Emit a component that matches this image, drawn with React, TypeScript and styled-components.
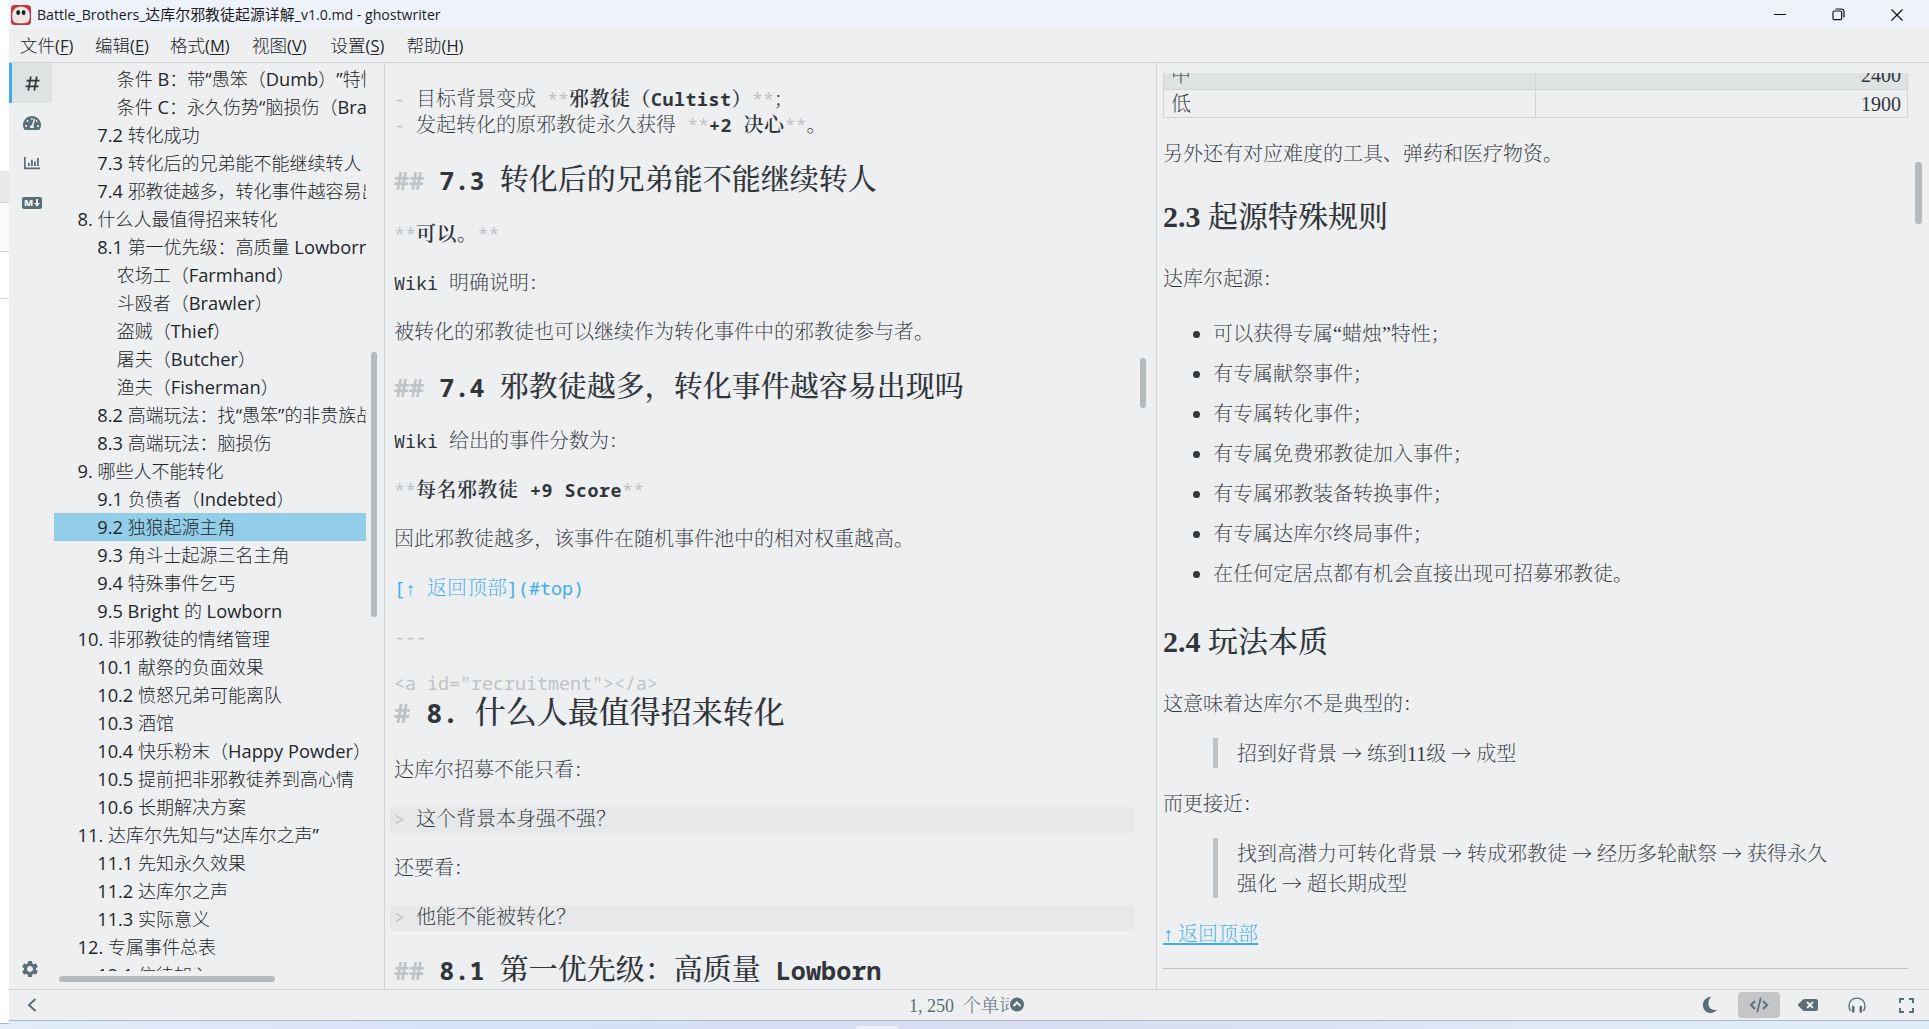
import React from "react";
import styled, { createGlobalStyle, css } from "styled-components";
import { FaBackspace, FaTachometerAlt } from "react-icons/fa";
import { MdSettings } from "react-icons/md";

const UI_CJK = '"Noto Sans CJK SC", sans-serif';
const UI_LATIN = '"Open Sans", "Noto Sans", "Noto Sans CJK SC", sans-serif';
const SERIF_CJK = '"Noto Serif CJK SC", "Noto Sans CJK SC", serif';
const MONO = '"Noto Sans Mono", "DejaVu Sans Mono", monospace';
const SERIF = '"Liberation Serif", "Noto Serif CJK SC", "Noto Sans CJK SC", serif';

const ink = "#31363b";
const icon = "#5b6f78";
const line = "#d0d4d7";
const faint = "#bdc3c7";
const accent = "#3daee9";
const paper = "#eeeff1";

const GlobalStyle = createGlobalStyle`
  * { box-sizing: border-box; }
  body { margin: 0; background: #fff; overflow: hidden; text-spacing-trim: space-all; }
`;

const Desktop = styled.div`
  width: 1929px;
  height: 1029px;
  display: flex;
  flex-direction: column;
  overflow: hidden;
  background: #fff;
  color: ${ink};
`;
const Main = styled.div`
  display: flex;
  height: 1021px;
`;
const Behind = styled.div`
  position: relative;
  width: 9px;
  height: 1024px;
  display: flex;
  flex-direction: column;
  background: #fff;
  border-bottom: 1px solid #b3b9c0;
`;
const BehindTop = styled.div`
  height: 171px;
`;
const BehindTab = styled.div`
  height: 32px;
  background: #e8e8e8;
  border-bottom: 1px solid #d4d4d4;
`;
const BehindRow = styled.div<{ $h: number; $bg: string }>`
  height: ${(p) => p.$h}px;
  background: ${(p) => p.$bg};
  border-bottom: 1px solid #d4d4d4;
`;
const Taskbar = styled.div`
  height: 8px;
  display: flex;
  justify-content: center;
  padding-right: 176px;
  background: linear-gradient(90deg, #e2edf9 0%, #dbe4f8 18%, #d5e2f8 30%, #d8dcf2 45%, #dbe0f5 65%, #e0eaf7 82%, #dfebf8 100%);
`;
const TaskTab = styled.div`
  width: 42px;
  margin-top: 5px;
  border-radius: 4px 4px 0 0;
  background: #f0f2fb;
`;

const Window = styled.div`
  flex: 1;
  min-width: 0;
  display: flex;
  flex-direction: column;
  background: ${paper};
  border-bottom: 1px solid #b3b9c0;
`;
const TitleBar = styled.div`
  height: 29px;
  display: flex;
  align-items: center;
  padding: 0 3px 0 2px;
  background: #eef3fb;
`;
const TitleText = styled.div`
  flex: 1;
  margin-left: 6px;
  padding-bottom: 2px;
  font-family: ${UI_CJK};
  font-size: 14.95px;
  line-height: 27px;
  color: #1b1b1b;
  white-space: pre;
`;
const WinButton = styled.div`
  width: 58.5px;
  display: flex;
  justify-content: center;
`;
const MenuBar = styled.div`
  height: 34px;
  display: flex;
  padding-left: 11px;
  border-bottom: 1px solid ${line};
`;
const MenuItem = styled.div<{ $w: number }>`
  width: ${(p) => p.$w}px;
  font-family: ${UI_CJK};
  font-size: 17.5px;
  font-weight: 300;
  line-height: 32px;
  white-space: pre;
  color: #232629;
`;

/* Latin runs get their own face and size next to the ideographs;
   a zero line-height keeps both faces from stretching the line box. */
const LatinRun = styled.span<{ $font: string; $ratio: number; $weight?: number }>`
  font-family: ${(p) => p.$font};
  font-size: ${(p) => p.$ratio}em;
  line-height: 0;
  ${(p) => p.$weight && css`font-weight: ${p.$weight};`}
`;
const HanRun = styled.span<{ $font: string }>`
  font-family: ${(p) => p.$font};
  line-height: 0;
`;
const Key = styled.u`
  text-underline-offset: 2px;
  text-decoration-thickness: 1px;
`;

type Face = { latin: string; han: string; ratio: number; weight?: number };
const titleFace: Face = { latin: UI_LATIN, han: UI_CJK, ratio: 0.945, weight: 400 };
const uiFace: Face = { latin: UI_LATIN, han: UI_CJK, ratio: 1.015, weight: 400 };
const monoFace: Face = { latin: MONO, han: SERIF_CJK, ratio: 0.9167, weight: 400 };
const strongFace: Face = { latin: MONO, han: SERIF_CJK, ratio: 0.9167, weight: 700 };
const headFace: Face = { latin: MONO, han: SERIF_CJK, ratio: 0.868, weight: 700 };
const serifFace: Face = { latin: SERIF, han: SERIF_CJK, ratio: 1, weight: 400 };
const titleSerifFace: Face = { latin: SERIF, han: SERIF_CJK, ratio: 1, weight: 700 };

const RUNS = /[\u0000-\u024f\u2018-\u201d\u2191]+|[^\u0000-\u024f\u2018-\u201d\u2191]+/g;
const LATIN = /^[\u0000-\u024f\u2018-\u201d\u2191]/;

function Mixed({ text, face }: { text: string; face: Face }) {
  const runs = text.match(RUNS) || [];
  return (
    <>
      {runs.map((r, i) =>
        LATIN.test(r) ? (
          <LatinRun key={i} $font={face.latin} $ratio={face.ratio} $weight={face.weight}>{r}</LatinRun>
        ) : (
          <HanRun key={i} $font={face.han}>{r}</HanRun>
        )
      )}
    </>
  );
}

const Body = styled.div`
  height: 926px;
  display: flex;
`;
const Rail = styled.div`
  width: 45px;
  display: flex;
  flex-direction: column;
`;
const RailButton = styled.div<{ $active?: boolean }>`
  width: 43px;
  height: 40px;
  display: flex;
  align-items: center;
  justify-content: center;
  color: ${(p) => (p.$active ? ink : icon)};
  background: ${(p) => (p.$active ? "#dfe2e3" : "transparent")};
  border-left: 3px solid ${(p) => (p.$active ? accent : "transparent")};
`;
const RailFoot = styled.div`
  margin-top: auto;
  height: 30px;
  padding-left: 11px;
  color: ${icon};
`;
const MdBadge = styled.div`
  width: 20px;
  height: 12px;
  display: flex;
  align-items: center;
  justify-content: center;
  gap: 1px;
  border-radius: 2px;
  background: ${icon};
  color: ${paper};
  font: 800 9.5px/12px "Open Sans", sans-serif;
`;

const Outline = styled.div`
  position: relative;
  width: 331px;
  border-right: 1px solid ${line};
`;
const OutlineList = styled.div`
  width: 312px;
  height: 908px;
  padding-top: 2px;
  overflow: hidden;
`;
const OutlineRow = styled.div<{ $level: number; $selected?: boolean }>`
  height: 28px;
  padding-left: ${(p) => 4 + p.$level * 19.6}px;
  font-family: ${UI_CJK};
  font-size: 18px;
  font-weight: 300;
  line-height: 26px;
  white-space: pre;
  color: #232629;
  background: ${(p) => (p.$selected ? "#93cee9" : "transparent")};
`;
const Scroller = styled.div<{ $x: number; $y: number; $w: number; $h: number }>`
  position: absolute;
  left: ${(p) => p.$x}px;
  top: ${(p) => p.$y}px;
  width: ${(p) => p.$w}px;
  height: ${(p) => p.$h}px;
  border-radius: 3px;
  background: #b4babe;
`;

const Editor = styled.div`
  position: relative;
  width: 772px;
  padding: 24px 21px 0 9px;
  overflow: hidden;
  border-right: 1px solid ${line};
`;
const SourceLine = styled.div<{ $gap?: number; $color?: string }>`
  height: 26px;
  margin-top: ${(p) => p.$gap || 0}px;
  font-family: ${SERIF_CJK};
  font-size: 20px;
  font-weight: 250;
  line-height: 22px;
  white-space: pre;
  color: ${(p) => p.$color || ink};
`;
const TagLine = styled(SourceLine)`
  height: 19px;
  line-height: 17px;
`;
const SourceHeading = styled(SourceLine)<{ $size: number; $h: number }>`
  height: ${(p) => p.$h}px;
  font-size: ${(p) => p.$size}px;
  font-weight: 500;
  line-height: ${(p) => p.$h - 3}px;
`;
const QuoteLine = styled(SourceLine)`
  margin-left: -4px;
  padding-left: 4px;
  border-radius: 4px;
  background: #e7e8ea;
`;
const Mark = styled.span`
  color: ${faint};
`;
const Strong = styled.span`
  font-weight: 600;
  letter-spacing: 0.5px;
`;

const Preview = styled.div`
  position: relative;
  flex: 1;
  padding: 10px 21px 0 6px;
`;
const Page = styled.div`
  height: 914px;
  overflow: hidden;
  font-family: ${SERIF_CJK};
  font-size: 20px;
  font-weight: 250;
  line-height: 30px;
  white-space: pre;
`;
const Table = styled.div`
  display: flex;
  flex-direction: column;
  margin-top: -12px;
  border: 1px solid ${line};
  border-top: 0;
`;
const TableRow = styled.div<{ $shade?: boolean; $h: number }>`
  display: grid;
  grid-template-columns: 371px 1fr;
  height: ${(p) => p.$h}px;
  line-height: 25px;
  background: ${(p) => (p.$shade ? "#dfe2e3" : "transparent")};
  border-bottom: ${(p) => (p.$shade ? `1px solid ${line}` : 0)};
`;
const Cell = styled.div<{ $num?: boolean }>`
  padding: 0 6px 0 7px;
  text-align: ${(p) => (p.$num ? "right" : "left")};
  border-left: ${(p) => (p.$num ? `1px solid ${line}` : 0)};
`;
const Para = styled.div<{ $top: number }>`
  margin-top: ${(p) => p.$top}px;
  height: 30px;
`;
const PageHeading = styled.div`
  margin-top: 25px;
  height: 45px;
  font-size: 30px;
  font-weight: 500;
  line-height: 42px;
`;
const List = styled.ul`
  margin: 20px 0 0;
  padding: 0 0 0 50px;
  list-style: none;
`;
const Item = styled.li`
  display: flex;
  align-items: center;
  height: 40px;
  &::before {
    content: "";
    width: 7px;
    height: 7px;
    margin: 2px 13px 0 -20px;
    border-radius: 50%;
    background: ${ink};
  }
`;
const Quote = styled.div`
  margin: 20px 0 0 50px;
  padding-left: 19px;
  border-left: 5px solid ${faint};
`;
const Link = styled.span`
  color: ${accent};
  text-decoration: underline;
  text-decoration-thickness: 1.5px;
  text-underline-offset: 2px;
`;
const Rule = styled.div`
  margin-top: 20px;
  height: 1px;
  background: ${faint};
`;

const StatusBar = styled.div`
  height: 31px;
  display: flex;
  align-items: center;
  border-top: 1px solid ${line};
  color: ${icon};
`;
const StatusLeft = styled.div`
  width: 900px;
  padding-left: 18px;
  display: flex;
`;
const WordCount = styled.div`
  width: 100px;
  overflow: hidden;
  font-family: ${SERIF_CJK};
  font-size: 18px;
  font-weight: 300;
  line-height: 24px;
  padding-bottom: 3px;
  white-space: pre;
`;
const Count = styled.span`
  font-family: "Liberation Serif", serif;
  font-weight: 400;
  line-height: 0;
  word-spacing: 4.5px;
`;
const Wide = styled.span`
  letter-spacing: 4.5px;
`;
const StatusTools = styled.div`
  display: flex;
  align-items: center;
  gap: 7px;
  margin-left: auto;
  padding-right: 2px;
`;
const Tool = styled.div<{ $on?: boolean }>`
  width: 42px;
  height: 26px;
  display: flex;
  align-items: center;
  justify-content: center;
  border-radius: 4px;
  background: ${(p) => (p.$on ? "#c4c6c8" : "transparent")};
`;

const AppIcon = () => (
  <svg width="20" height="20" viewBox="0 0 20 20">
    <rect width="20" height="20" rx="3.5" fill="#c9353b" />
    <path d="M1.200 10.500C1.200 5 4.800 1.500 10 1.500s8.800 3.500 8.800 9c0 2.500-.4 4.500-1.500 6.300-1.800 2-12.800 2-14.600 0-1.100-1.800-1.500-3.800-1.500-6.300z" fill="#efe7e5" />
    <ellipse cx="7.200" cy="7.400" rx="1.900" ry="2.500" fill="#1d1d20" />
    <ellipse cx="12.600" cy="7.400" rx="1.900" ry="2.500" fill="#1d1d20" />
  </svg>
);
const Hash = () => (
  <svg width="15" height="15" viewBox="0 0 15 15" fill="none" stroke="currentColor" strokeWidth="1.7">
    <path d="M5.800.5l-2.500 14M11.800.5l-2.500 14M1.500 4.700h13M.5 10.300h13" />
  </svg>
);
const Chart = () => (
  <svg width="18" height="13" viewBox="0 0 18 13" fill="currentColor">
    <path d="M1 0h1.700v10.500H17V12.300H1zM5 5.800h1.800V9H5zM8 2.700h1.800V9H8zM11 4.500h1.800V9H11zM14 1h1.800v8H14z" />
  </svg>
);
const DownArrow = () => (
  <svg width="6" height="8" viewBox="0 0 6 8" fill="currentColor">
    <path d="M2 0h2v4h2L3 7.800 0 4h2z" />
  </svg>
);
const Moon = () => (
  <svg width="16" height="18" viewBox="0 0 16 18" fill="currentColor">
    <path d="M9.500.8C3.800 1.200.9 4.700.9 9c0 4.600 3.300 8 7.700 8 2.700 0 5.100-1.200 6.400-3.200-5.100.7-8.600-2-8.600-6.400 0-2.700 1-5 3.100-6.600z" />
  </svg>
);
const Code = () => (
  <svg width="20" height="16" viewBox="0 0 20 16" fill="none" stroke="currentColor" strokeWidth="2">
    <path d="M6 4L2 8l4 4M14 4l4 4-4 4" />
    <path d="M11.800.8L8.200 15.200" strokeWidth="1.700" />
  </svg>
);
const Headphones = () => (
  <svg width="18" height="16" viewBox="0 0 18 16" fill="none" stroke="currentColor">
    <path d="M2.500 14C1 12 1 10 1 8.800 1 4 4.500 1.200 9 1.200S17 4 17 8.800c0 1.200 0 3.200-1.500 5.200" strokeWidth="1.300" />
    <path d="M5.200 10v4.500M12.800 10v4.500" strokeWidth="2.600" strokeLinecap="round" />
  </svg>
);
const Expand = () => (
  <svg width="15" height="15" viewBox="0 0 15 15" fill="none" stroke="currentColor" strokeWidth="2">
    <path d="M1 5V1h4M10 1h4v4M14 10v4h-4M5 14H1v-4" />
  </svg>
);
const UpBadge = () => (
  <svg width="16" height="16" viewBox="0 0 16 16">
    <circle cx="8" cy="7.500" r="7" fill={icon} />
    <path d="M4.500 9L8 5.500 11.500 9" fill="none" stroke={paper} strokeWidth="2" />
  </svg>
);
const Back = () => (
  <svg width="10" height="14" viewBox="0 0 10 14" fill="none" stroke="currentColor" strokeWidth="2">
    <path d="M8.500 1L2 7l6.500 6" />
  </svg>
);

const menus: [string, string, number][] = [
  ["文件", "F", 75], ["编辑", "E", 75], ["格式", "M", 82],
  ["视图", "V", 78.5], ["设置", "S", 76], ["帮助", "H", 75],
];

const outline: [number, string][] = [
  [3, "条件 B：带“愚笨（Dumb）”特性"], [3, "条件 C：永久伤势“脑损伤（Brain）”"],
  [2, "7.2 转化成功"], [2, "7.3 转化后的兄弟能不能继续转人"], [2, "7.4 邪教徒越多，转化事件越容易出现吗"],
  [1, "8. 什么人最值得招来转化"], [2, "8.1 第一优先级：高质量 Lowborn"],
  [3, "农场工（Farmhand）"], [3, "斗殴者（Brawler）"], [3, "盗贼（Thief）"], [3, "屠夫（Butcher）"], [3, "渔夫（Fisherman）"],
  [2, "8.2 高端玩法：找“愚笨”的非贵族战"], [2, "8.3 高端玩法：脑损伤"], [1, "9. 哪些人不能转化"],
  [2, "9.1 负债者（Indebted）"], [2, "9.2 独狼起源主角"], [2, "9.3 角斗士起源三名主角"], [2, "9.4 特殊事件乞丐"],
  [2, "9.5 Bright 的 Lowborn"], [1, "10. 非邪教徒的情绪管理"], [2, "10.1 献祭的负面效果"], [2, "10.2 愤怒兄弟可能离队"],
  [2, "10.3 酒馆"], [2, "10.4 快乐粉末（Happy Powder）"], [2, "10.5 提前把非邪教徒养到高心情"], [2, "10.6 长期解决方案"],
  [1, "11. 达库尔先知与“达库尔之声”"], [2, "11.1 先知永久效果"], [2, "11.2 达库尔之声"], [2, "11.3 实际意义"],
  [1, "12. 专属事件总表"], [2, "12.1 信徒加入"],
];

const rules = [
  "可以获得专属“蜡烛”特性；", "有专属献祭事件；", "有专属转化事件；", "有专属免费邪教徒加入事件；",
  "有专属邪教装备转换事件；", "有专属达库尔终局事件；", "在任何定居点都有机会直接出现可招募邪教徒。",
];

const M = ({ children }: { children: string }) => <Mixed text={children} face={monoFace} />;
const H = ({ children }: { children: string }) => <Mixed text={children} face={headFace} />;
const S = ({ children }: { children: string }) => <Mixed text={children} face={serifFace} />;
const T = ({ children }: { children: string }) => <Mixed text={children} face={titleSerifFace} />;
const B = ({ children }: { children: string }) => <Strong><Mixed text={children} face={strongFace} /></Strong>;
const Weak = ({ children }: { children: string }) => <Mark><M>{children}</M></Mark>;

export default function App() {
  return (
    <Desktop>
      <GlobalStyle />
      <Main>
        <Behind>
          <BehindTop /><BehindTab />
          <BehindRow $h={49} $bg="#f9f9f9" /><BehindRow $h={47} $bg="#fff" />
        </Behind>
        <Window>
          <TitleBar>
            <AppIcon />
            <TitleText><Mixed text="Battle_Brothers_达库尔邪教徒起源详解_v1.0.md - ghostwriter" face={titleFace} /></TitleText>
            <WinButton><svg width="12" height="12"><path d="M0 5.500h12" stroke="#111" /></svg></WinButton>
            <WinButton>
              <svg width="13" height="13" fill="none" stroke="#111" strokeWidth="1.200">
                <rect x="1" y="3" width="8.700" height="8.700" rx="1.500" />
                <path d="M3.500 1h6a2.500 2.500 0 0 1 2.500 2.500v6" />
              </svg>
            </WinButton>
            <WinButton><svg width="12" height="12"><path d="M.5.5l11 11M11.500.5l-11 11" stroke="#111" strokeWidth="1.200" /></svg></WinButton>
          </TitleBar>
          <MenuBar>
            {menus.map(([name, key, w]) => (
              <MenuItem key={key} $w={w}>
                <HanRun $font={UI_CJK}>{name}</HanRun>
                <LatinRun $font={UI_LATIN} $ratio={0.945} $weight={400}>(<Key>{key}</Key>)</LatinRun>
              </MenuItem>
            ))}
          </MenuBar>
          <Body>
            <Rail>
              <RailButton $active><Hash /></RailButton>
              <RailButton><FaTachometerAlt size={18} /></RailButton>
              <RailButton><Chart /></RailButton>
              <RailButton><MdBadge>M<DownArrow /></MdBadge></RailButton>
              <RailFoot><MdSettings size={20} /></RailFoot>
            </Rail>
            <Outline>
              <OutlineList>
                {outline.map(([level, text]) => (
                  <OutlineRow key={text} $level={level} $selected={text.startsWith("9.2")}>
                    <Mixed text={text} face={uiFace} />
                  </OutlineRow>
                ))}
              </OutlineList>
              <Scroller $x={317} $y={289} $w={6} $h={265} />
              <Scroller $x={5} $y={913} $w={216} $h={6} />
            </Outline>
            <Editor>
              <SourceLine><Weak>- </Weak><M>目标背景变成 </M><Weak>**</Weak><B>邪教徒（Cultist）</B><Weak>**</Weak><M>；</M></SourceLine>
              <SourceLine><Weak>- </Weak><M>发起转化的原邪教徒永久获得 </M><Weak>**</Weak><B>+2 决心</B><Weak>**</Weak><M>。</M></SourceLine>
              <SourceHeading $size={29} $h={36} $gap={22}><Mark><H>## </H></Mark><H>7.3 转化后的兄弟能不能继续转人</H></SourceHeading>
              <SourceLine $gap={25}><Weak>**</Weak><B>可以。</B><Weak>**</Weak></SourceLine>
              <SourceLine $gap={23}><M>Wiki 明确说明：</M></SourceLine>
              <SourceLine $gap={23}><M>被转化的邪教徒也可以继续作为转化事件中的邪教徒参与者。</M></SourceLine>
              <SourceHeading $size={29} $h={36} $gap={22}><Mark><H>## </H></Mark><H>7.4 邪教徒越多，转化事件越容易出现吗</H></SourceHeading>
              <SourceLine $gap={25}><M>Wiki 给出的事件分数为：</M></SourceLine>
              <SourceLine $gap={23}><Weak>**</Weak><B>每名邪教徒 +9 Score</B><Weak>**</Weak></SourceLine>
              <SourceLine $gap={23}><M>因此邪教徒越多，该事件在随机事件池中的相对权重越高。</M></SourceLine>
              <SourceLine $gap={23} $color={accent}><M>[↑ 返回顶部](#top)</M></SourceLine>
              <SourceLine $gap={23}><Weak>---</Weak></SourceLine>
              <TagLine $gap={22}><Weak>{'<a id="recruitment"></a>'}</Weak></TagLine>
              <SourceHeading $size={31} $h={38}><Mark><H># </H></Mark><H>8. 什么人最值得招来转化</H></SourceHeading>
              <SourceLine $gap={28}><M>达库尔招募不能只看：</M></SourceLine>
              <QuoteLine $gap={23}><Weak>{"> "}</Weak><M>这个背景本身强不强？</M></QuoteLine>
              <SourceLine $gap={23}><M>还要看：</M></SourceLine>
              <QuoteLine $gap={23}><Weak>{"> "}</Weak><M>他能不能被转化？</M></QuoteLine>
              <SourceHeading $size={29} $h={36} $gap={20}><Mark><H>## </H></Mark><H>8.1 第一优先级：高质量 Lowborn</H></SourceHeading>
              <Scroller $x={755} $y={295} $w={6} $h={50} />
            </Editor>
            <Preview>
              <Page>
                <Table>
                  <TableRow $shade $h={29}><Cell><S>中</S></Cell><Cell $num><S>2400</S></Cell></TableRow>
                  <TableRow $h={27}><Cell><S>低</S></Cell><Cell $num><S>1900</S></Cell></TableRow>
                </Table>
                <Para $top={20}><S>另外还有对应难度的工具、弹药和医疗物资。</S></Para>
                <PageHeading><T>2.3 起源特殊规则</T></PageHeading>
                <Para $top={25}><S>达库尔起源：</S></Para>
                <List>{rules.map((r) => <Item key={r}><div><S>{r}</S></div></Item>)}</List>
                <PageHeading><T>2.4 玩法本质</T></PageHeading>
                <Para $top={25}><S>这意味着达库尔不是典型的：</S></Para>
                <Quote><S>招到好背景 → 练到11级 → 成型</S></Quote>
                <Para $top={20}><S>而更接近：</S></Para>
                <Quote><S>{"找到高潜力可转化背景 → 转成邪教徒 → 经历多轮献祭 → 获得永久\n强化 → 超长期成型"}</S></Quote>
                <Para $top={20}><Link><S>↑ 返回顶部</S></Link></Para>
                <Rule />
              </Page>
              <Scroller $x={758} $y={99} $w={7} $h={62} />
            </Preview>
          </Body>
          <StatusBar>
            <StatusLeft><Back /></StatusLeft>
            <WordCount>
              <Count>1<Wide>,</Wide>250 </Count><HanRun $font={SERIF_CJK}>个单词</HanRun>
            </WordCount>
            <UpBadge />
            <StatusTools>
              <Tool><Moon /></Tool>
              <Tool $on><Code /></Tool>
              <Tool><FaBackspace size={20} /></Tool>
              <Tool><Headphones /></Tool>
              <Tool><Expand /></Tool>
            </StatusTools>
          </StatusBar>
        </Window>
      </Main>
      <Taskbar><TaskTab /></Taskbar>
    </Desktop>
  );
}
